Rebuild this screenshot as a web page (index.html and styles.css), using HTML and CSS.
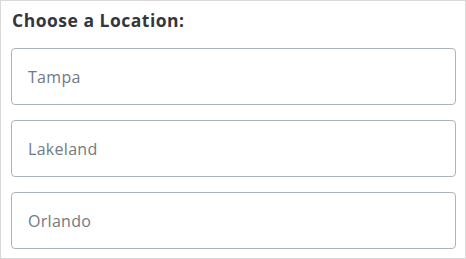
FILE: index.html
```html
<!DOCTYPE html>
<html>
<head>
<meta charset="utf-8">
<link rel="stylesheet" href="styles.css">
</head>
<body>
<div class="panel">
  <h2 class="title">Choose a Location:</h2>
  <div class="options">
    <div class="option">Tampa</div>
    <div class="option">Lakeland</div>
    <div class="option">Orlando</div>
  </div>
</div>
</body>
</html>
```
FILE: styles.css
```css
html, body {
  margin: 0;
  padding: 0;
  background: #fff;
}
.panel {
  box-sizing: border-box;
  width: 466px;
  height: 259px;
  border: 1px solid #d9d9d9;
  padding: 8px 9px 0 10px;
  font-family: "Open Sans", "Lato", sans-serif;
}
.title {
  margin: 0 0 0 1px;
  font-size: 17.5px;
  font-weight: 700;
  color: #33373d;
  line-height: 22px;
  letter-spacing: 0.5px;
}
.options {
  display: flex;
  flex-direction: column;
  gap: 15px;
  margin-top: 17px;
}
.option {
  box-sizing: border-box;
  height: 57px;
  border: 1px solid #a9b4bc;
  border-radius: 4px;
  padding: 0 16px;
  display: flex;
  align-items: center;
  font-size: 16px;
  letter-spacing: 0.3px;
  color: #6f7a84;
}
```
